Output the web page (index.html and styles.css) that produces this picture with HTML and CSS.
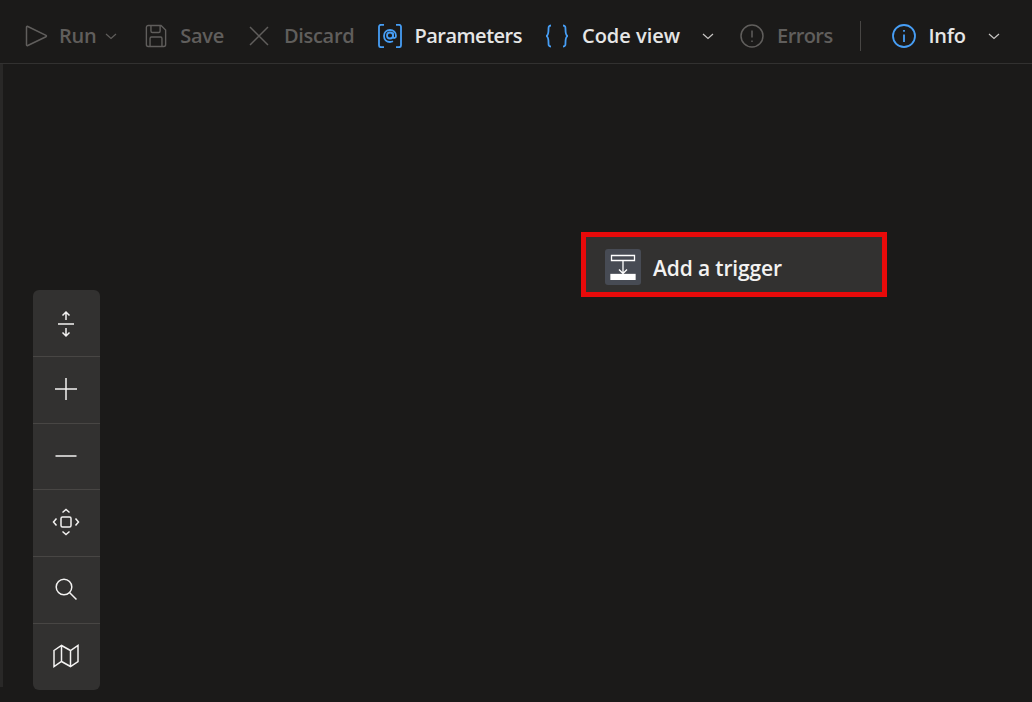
FILE: index.html
```html
<!DOCTYPE html>
<html lang="en">
<head>
    <meta charset="UTF-8">
    <title>Designer</title>
    <link rel="stylesheet" href="styles.css">
</head>
<body>
    <header class="toolbar">
        <div class="tool off tool-run">
            <svg class="icon" width="24" height="24" viewBox="0 0 24 24"><path d="M1.500 3.200v17.600c0 .8.7 1 1.300.7L21 12.700c.6-.3.6-1 0-1.300L2.800 2.500c-.6-.3-1.300 0-1.300.7z"/></svg>
            <span>Run</span>
            <svg class="chev" width="14" height="14" viewBox="0 0 14 14"><path d="M2 5l5 4.500L12 5"/></svg>
        </div>
        <div class="tool off tool-save">
            <svg class="icon" width="22" height="24" viewBox="0 0 24 24" preserveAspectRatio="none"><path d="M3.500 1.500h14l5 4.500v14.500a2 2 0 0 1-2 2h-17a2 2 0 0 1-2-2v-17a2 2 0 0 1 2-2z"/><path d="M6.500 1.500v5.500a1.500 1.500 0 0 0 1.500 1.500h7a1.500 1.500 0 0 0 1.500-1.500V1.500M5.500 22.500v-8a1.500 1.500 0 0 1 1.500-1.500h10a1.500 1.500 0 0 1 1.500 1.500v8"/></svg>
            <span>Save</span>
        </div>
        <div class="tool off tool-discard">
            <svg class="icon" width="22" height="22" viewBox="0 0 22 22"><path d="M2 2l18 18M20 2L2 20"/></svg>
            <span>Discard</span>
        </div>
        <div class="tool tool-params">
            <svg class="icon blue" width="24" height="24" viewBox="0 0 24 24"><path d="M6 .8H3A2 2 0 0 0 1 2.800v18.400a2 2 0 0 0 2 2h3M18 .8h3a2 2 0 0 1 2 2v18.400a2 2 0 0 1-2 2h-3"/><circle cx="12" cy="11.500" r="3"/><path d="M15 8.500v4.200c0 1.800 3 1.800 3-.7 0-3.500-2.500-6-6-6s-6 2.500-6 6 2.500 6 6 6c1.200 0 2.200-.3 3-.7"/></svg>
            <span>Parameters</span>
        </div>
        <div class="tool tool-code">
            <svg class="icon blue" width="22" height="24" viewBox="0 0 22 24"><path d="M5 1.500c-2.500 0-2.500 1.500-2.500 4s0 5.500-2 6.500c2 1 2 4 2 6.500s0 4 2.500 4M17 1.500c2.500 0 2.500 1.500 2.500 4s0 5.500 2 6.500c-2 1-2 4-2 6.500s0 4-2.500 4"/></svg>
            <span>Code view</span>
            <svg class="chev light" width="14" height="14" viewBox="0 0 14 14"><path d="M2 5l5 4.500L12 5"/></svg>
        </div>
        <div class="tool off tool-errors">
            <svg class="icon" width="24" height="24" viewBox="0 0 24 24"><circle cx="12" cy="12" r="11"/><path d="M12 6.500v7M12 16.500v1.500"/></svg>
            <span>Errors</span>
        </div>
        <div class="divider"></div>
        <div class="tool tool-info">
            <svg class="icon blue" width="24" height="24" viewBox="0 0 24 24"><circle cx="12" cy="12" r="11"/><path d="M12 10.500v7.500M12 6v1.800"/></svg>
            <span>Info</span>
            <svg class="chev light" width="14" height="14" viewBox="0 0 14 14"><path d="M2 5l5 4.500L12 5"/></svg>
        </div>
    </header>

    <main class="canvas">
        <div class="side-strip"></div>

        <div class="trigger">
            <div class="trigger-icon">
                <svg width="26" height="26" viewBox="0 0 26 26"><path class="thin" d="M1.500 1.500h23v5h-23zM13 6.500v13M9 15.500l4 4 4-4"/><rect x="1" y="20.500" width="24" height="5" fill="#fff"/></svg>
            </div>
            <span class="trigger-label">Add a trigger</span>
        </div>

        <div class="zoom-panel">
            <button class="zoom-btn fit-height">
                <svg width="24" height="28" viewBox="0 0 24 28"><path d="M4 14h16M12 2v8M8.500 5.500L12 2l3.500 3.500M12 26v-8M8.500 22.500L12 26l3.500-3.500"/></svg>
            </button>
            <button class="zoom-btn">
                <svg width="24" height="24" viewBox="0 0 24 24"><path d="M1 12h22M12 1v22"/></svg>
            </button>
            <button class="zoom-btn">
                <svg width="24" height="24" viewBox="0 0 24 24"><path d="M1.500 12h21"/></svg>
            </button>
            <button class="zoom-btn">
                <svg width="28" height="28" viewBox="0 0 28 28"><rect x="9" y="9" width="10" height="10" rx="1.500"/><path d="M10.500 4.500L14 1.500l3.500 3M10.500 23.500l3.500 3 3.500-3M4.500 10.500L1.500 14l3 3.500M23.500 10.500l3 3.500-3 3.500"/></svg>
            </button>
            <button class="zoom-btn">
                <svg width="24" height="24" viewBox="0 0 24 24"><circle cx="10" cy="10" r="7.800"/><path d="M15.500 15.500l7 7"/></svg>
            </button>
            <button class="zoom-btn">
                <svg width="26" height="24" viewBox="0 0 26 24"><path d="M1 6.500l7.500-5 9 5 7.500-5v16l-7.500 5-9-5-7.500 5zM8.500 1.500v16M17.500 6.500v16"/></svg>
            </button>
        </div>
    </main>
</body>
</html>
```

FILE: styles.css
```css
html, body {
    height: 100%;
}

body {
    background-color: #1b1a19;
    color: #e6e6e6;
    font-family: "Open Sans", "Noto Sans", sans-serif;
    margin: 0;
    overflow: hidden;
}

svg {
    display: block;
    flex: none;
    fill: none;
    stroke: currentColor;
    stroke-width: 1.5;
}

.toolbar {
    display: flex;
    align-items: center;
    height: 55px;
    padding: 8px 0 0 25px;
    border-bottom: 1px solid #323130;
}

.tool {
    display: flex;
    align-items: center;
    gap: 13px;
    font-size: 20px;
    font-weight: 600;
    letter-spacing: -0.3px;
    color: #e6e6e6;
}

.tool.off {
    color: #605e5c;
}

.icon.blue {
    color: #479ef5;
    stroke-width: 1.8;
}

.chev {
    color: #605e5c;
    stroke-width: 1.2;
    margin-left: -4px;
}

.chev.light {
    color: #c8c6c4;
}

.tool-run {
    gap: 10px;
}

.tool-run .chev {
    margin-left: -2px;
}

.tool-save {
    margin-left: 27px;
}

.tool-discard {
    margin-left: 24px;
    gap: 14px;
}

.tool-params {
    margin-left: 24px;
    gap: 12px;
    letter-spacing: -0.5px;
}

.tool-code {
    margin-left: 24px;
    gap: 14px;
    letter-spacing: 0;
}

.tool-code .chev {
    margin-left: 7px;
}

.tool-errors {
    margin-left: 25px;
    gap: 13px;
    letter-spacing: -0.6px;
}

.divider {
    width: 1px;
    height: 30px;
    margin-left: 27px;
    background-color: #484644;
}

.tool-info {
    margin-left: 31px;
}

.tool-info .chev {
    margin-left: 8px;
}

.canvas {
    position: relative;
    height: 638px;
}

.side-strip {
    position: absolute;
    left: 0;
    top: 0;
    width: 3px;
    height: 623px;
    background-color: #292827;
}

.trigger {
    position: absolute;
    left: 581px;
    top: 168px;
    width: 306px;
    height: 65px;
    box-sizing: border-box;
    display: flex;
    align-items: center;
    gap: 12px;
    padding: 4px 0 0 19px;
    border: 5px solid #e80a0a;
    background-color: #323130;
    font-size: 21px;
    font-weight: 600;
    letter-spacing: -0.15px;
    color: #f3f2f1;
}

.trigger-label {
    padding-top: 2px;
}

.trigger-icon {
    width: 36px;
    height: 36px;
    display: flex;
    align-items: center;
    justify-content: center;
    background-color: #474b54;
    border-radius: 3px;
    color: #fff;
}

.trigger-icon svg {
    stroke-width: 1.3;
}

.zoom-panel {
    position: absolute;
    left: 33px;
    top: 226px;
    width: 67px;
    height: 400px;
    display: flex;
    flex-direction: column;
    background-color: #323130;
    border-radius: 6px;
    overflow: hidden;
}

.zoom-btn {
    flex: 1;
    display: flex;
    align-items: center;
    justify-content: center;
    padding: 0 2px 2px 0;
    background: none;
    border: none;
    border-top: 1px solid #484644;
    color: #f3f2f1;
}

.zoom-btn:first-child {
    border-top: none;
}

.zoom-btn.fit-height svg {
    margin-top: 4px;
}
```
